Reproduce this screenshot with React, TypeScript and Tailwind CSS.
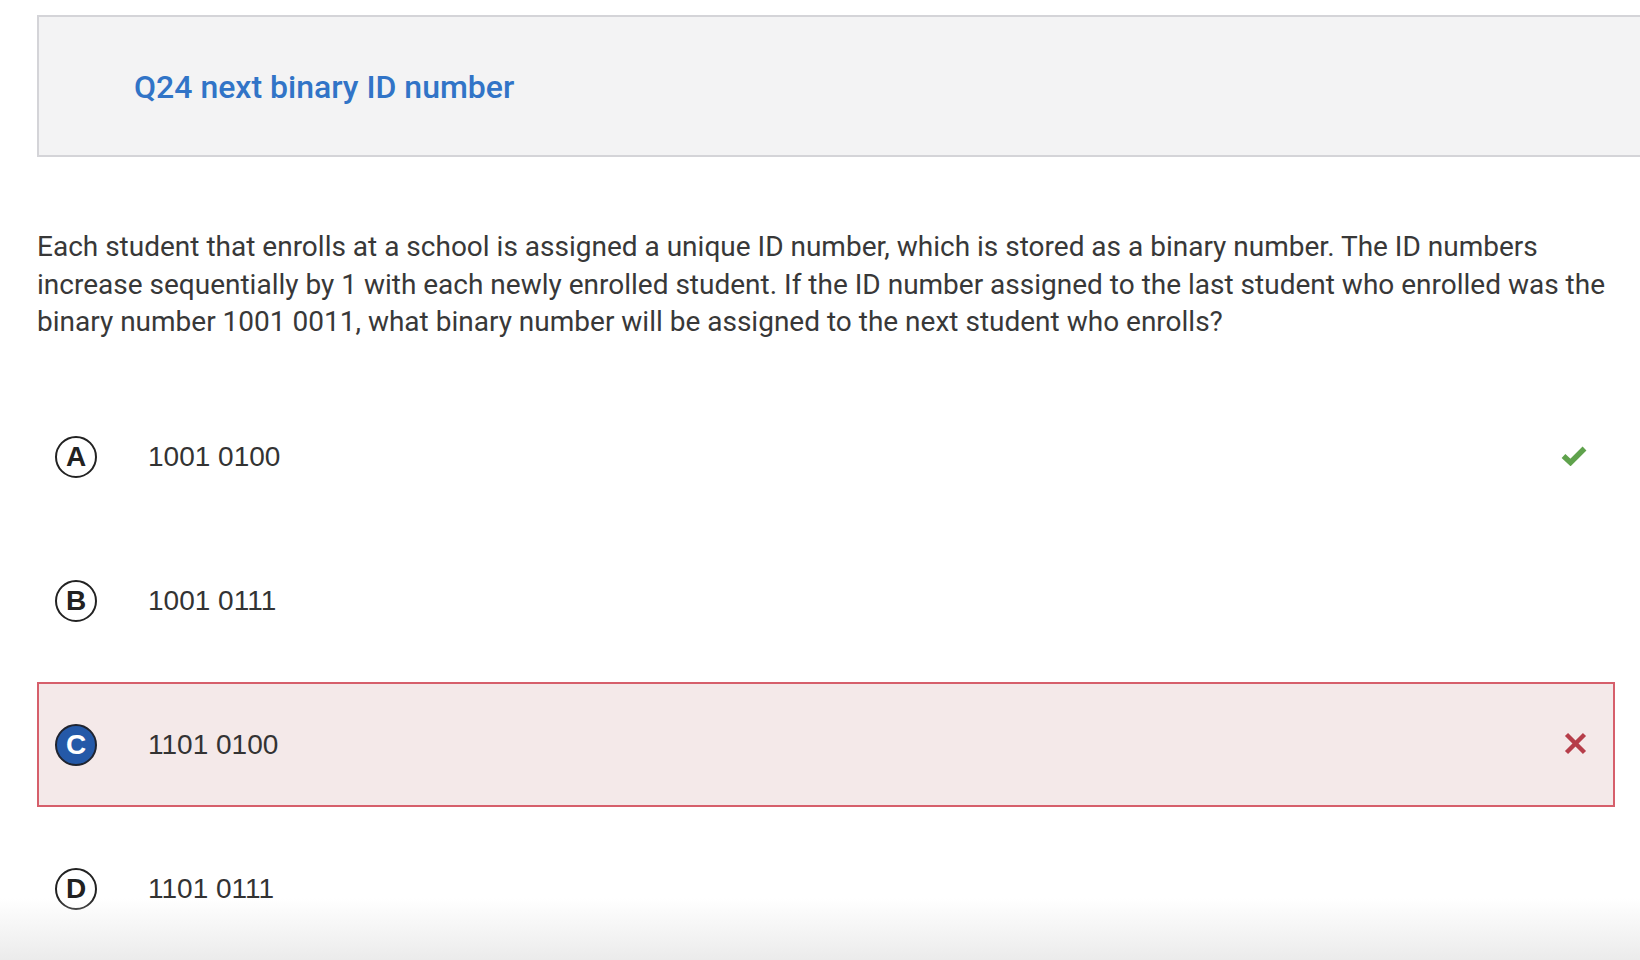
import React from "react";

const answers = [
  { letter: "A", text: "1001 0100", status: "correct" },
  { letter: "B", text: "1001 0111", status: "none" },
  { letter: "C", text: "1101 0100", status: "wrong" },
  { letter: "D", text: "1101 0111", status: "none" },
];

function Check() {
  return (
    <svg width="26" height="20" viewBox="0 0 26 20" fill="none" className="-mt-[2px]">
      <polyline points="2.5,10 9.5,16.5 23.5,2.5" stroke="#5fa24c" strokeWidth="5.5" strokeLinejoin="miter" />
    </svg>
  );
}

function Cross() {
  return (
    <svg width="23" height="23" viewBox="0 0 23 23" fill="none" className="-mt-[2px]">
      <line x1="2.5" y1="2.5" x2="20.5" y2="20.5" stroke="#b63e4a" strokeWidth="4.5" />
      <line x1="20.5" y1="2.5" x2="2.5" y2="20.5" stroke="#b63e4a" strokeWidth="4.5" />
    </svg>
  );
}

export default function App() {
  return (
    <div className="relative h-[960px] w-full overflow-hidden bg-white pl-[37px] pt-[15px]">
      <div className="flex h-[142px] w-[1620px] items-center border-2 border-r-0 border-[#d4d4d8] bg-[#f3f3f4] pl-[95px] pt-[2px]">
        <h1 className="text-[32px] font-medium text-[#3174c7] [font-family:Roboto,sans-serif]">
          Q24 next binary ID number
        </h1>
      </div>

      <p className="mt-[71px] w-[1578px] text-[28px] leading-[37.7px] text-[#383838] [font-family:Roboto,sans-serif]">
        Each student that enrolls at a school is assigned a unique ID number, which is stored as a binary number. The ID numbers increase sequentially by 1 with each newly enrolled student. If the ID number assigned to the last student who enrolled was the binary number 1001 0011, what binary number will be assigned to the next student who enrolls?
      </p>

      <div className="mt-[53px] flex w-[1578px] flex-col gap-[19px]">
        {answers.map((a) => {
          const wrong = a.status === "wrong";
          return (
            <div
              key={a.letter}
              className={
                wrong
                  ? "flex h-[125px] items-center border-2 border-[#d65f6b] bg-[#f4e9e9] pl-[16px] pr-[26px]"
                  : "flex h-[125px] items-center border-2 border-transparent pl-[16px] pr-[26px]"
              }
            >
              <div
                className={
                  wrong
                    ? "flex h-[42px] w-[42px] items-center justify-center rounded-full border-2 border-[#1f2430] bg-[#2459a8] text-[28px] font-bold text-white [font-family:'Liberation_Sans',Arial,sans-serif]"
                    : "flex h-[42px] w-[42px] items-center justify-center rounded-full border-2 border-[#222222] bg-white text-[28px] font-bold text-[#222222] [font-family:'Liberation_Sans',Arial,sans-serif]"
                }
              >
                {a.letter}
              </div>
              <div className="ml-[51px] flex-1 text-[28px] text-[#333333] [font-family:'Liberation_Sans',Arial,sans-serif]">
                {a.text}
              </div>
              {a.status === "correct" && <Check />}
              {wrong && <Cross />}
            </div>
          );
        })}
      </div>

      <div className="pointer-events-none absolute inset-x-0 bottom-0 h-[62px] bg-linear-to-b from-white/0 to-[#ebebeb]" />
    </div>
  );
}
